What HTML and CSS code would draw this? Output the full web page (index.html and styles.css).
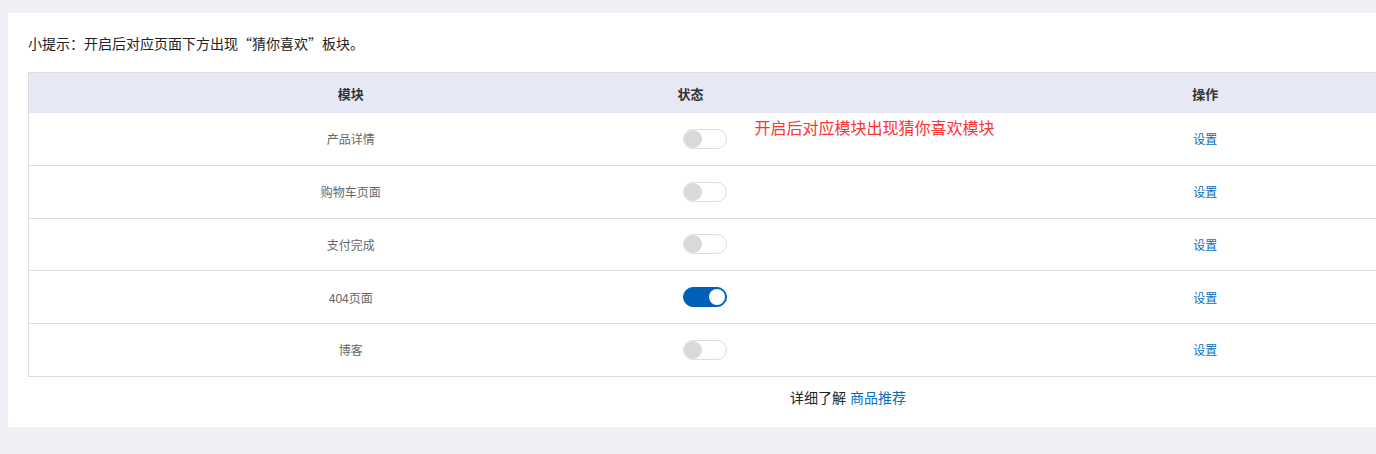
FILE: index.html
```html
<!DOCTYPE html>
<html lang="zh-CN">
<head>
  <meta charset="UTF-8">
  <title>猜你喜欢</title>
  <link rel="stylesheet" href="styles.css">
</head>
<body>
  <div class="panel">
    <p class="tip">小提示：开启后对应页面下方出现“猜你喜欢”板块。</p>

    <table class="modules">
      <colgroup>
        <col class="col-name">
        <col class="col-state">
        <col class="col-op">
      </colgroup>
      <thead>
        <tr>
          <th>模块</th>
          <th class="state">状态</th>
          <th>操作</th>
        </tr>
      </thead>
      <tbody>
        <tr>
          <td>产品详情</td>
          <td class="state">
            <span class="switch"></span>
            <span class="note">开启后对应模块出现猜你喜欢模块</span>
          </td>
          <td><a href="#">设置</a></td>
        </tr>
        <tr>
          <td>购物车页面</td>
          <td class="state"><span class="switch"></span></td>
          <td><a href="#">设置</a></td>
        </tr>
        <tr>
          <td>支付完成</td>
          <td class="state"><span class="switch"></span></td>
          <td><a href="#">设置</a></td>
        </tr>
        <tr>
          <td>404页面</td>
          <td class="state"><span class="switch on"></span></td>
          <td><a href="#">设置</a></td>
        </tr>
        <tr>
          <td>博客</td>
          <td class="state"><span class="switch"></span></td>
          <td><a href="#">设置</a></td>
        </tr>
      </tbody>
    </table>

    <p class="more">详细了解 <a href="#">商品推荐</a></p>
  </div>
</body>
</html>
```

FILE: styles.css
```css
html, body {
  overflow: hidden;
}
body {
  margin: 13px 0 0 8px;
  background: #eff0f5;
  font-family: "Liberation Sans", "Noto Sans CJK SC", sans-serif;
  color: #333;
}
a {
  color: #0a6ebd;
  text-decoration: none;
}
.panel {
  width: 1640px;
  padding: 20px 20px 19px;
  background: #fff;
}
.tip {
  margin: 0 0 19px;
  font-family: "Noto Sans CJK SC", sans-serif;
  font-size: 14px;
  line-height: 20px;
  color: #222;
}
.modules {
  width: 1500px;
  border-collapse: collapse;
  table-layout: fixed;
  border: 1px solid #ddd;
}
.col-name { width: 644px; }
.col-state { width: 210px; }
.col-op { width: 646px; }
.modules th {
  height: 40px;
  padding: 0;
  background: #e6e9f5;
  font-size: 13px;
  font-weight: bold;
  color: #333;
}
.modules td {
  height: 51.75px;
  padding: 0;
  border-bottom: 1px solid #ddd;
  text-align: center;
  font-size: 12px;
  color: #666;
}
.modules th.state {
  text-align: left;
  padding-left: 5px;
}
.modules td.state {
  position: relative;
  text-align: left;
  padding-left: 10px;
}
.switch {
  display: inline-block;
  vertical-align: middle;
  position: relative;
  box-sizing: border-box;
  width: 44px;
  height: 20px;
  border: 1px solid #ddd;
  border-radius: 10px;
  background: #fff;
}
.switch::after {
  content: "";
  position: absolute;
  left: 0;
  top: 0;
  width: 18px;
  height: 18px;
  border-radius: 50%;
  background: #d9d9d9;
}
.switch.on {
  border-color: #0060b6;
  background: #0060b6;
}
.switch.on::after {
  left: auto;
  right: 1px;
  top: 1px;
  width: 16px;
  height: 16px;
  background: #fff;
}
.note {
  position: absolute;
  left: 82px;
  top: 7px;
  white-space: nowrap;
  font-size: 16px;
  line-height: 18px;
  color: #f33;
}
.more {
  margin: 11px 0 0;
  text-align: center;
  font-size: 14px;
  line-height: 20px;
  color: #222;
}
```
